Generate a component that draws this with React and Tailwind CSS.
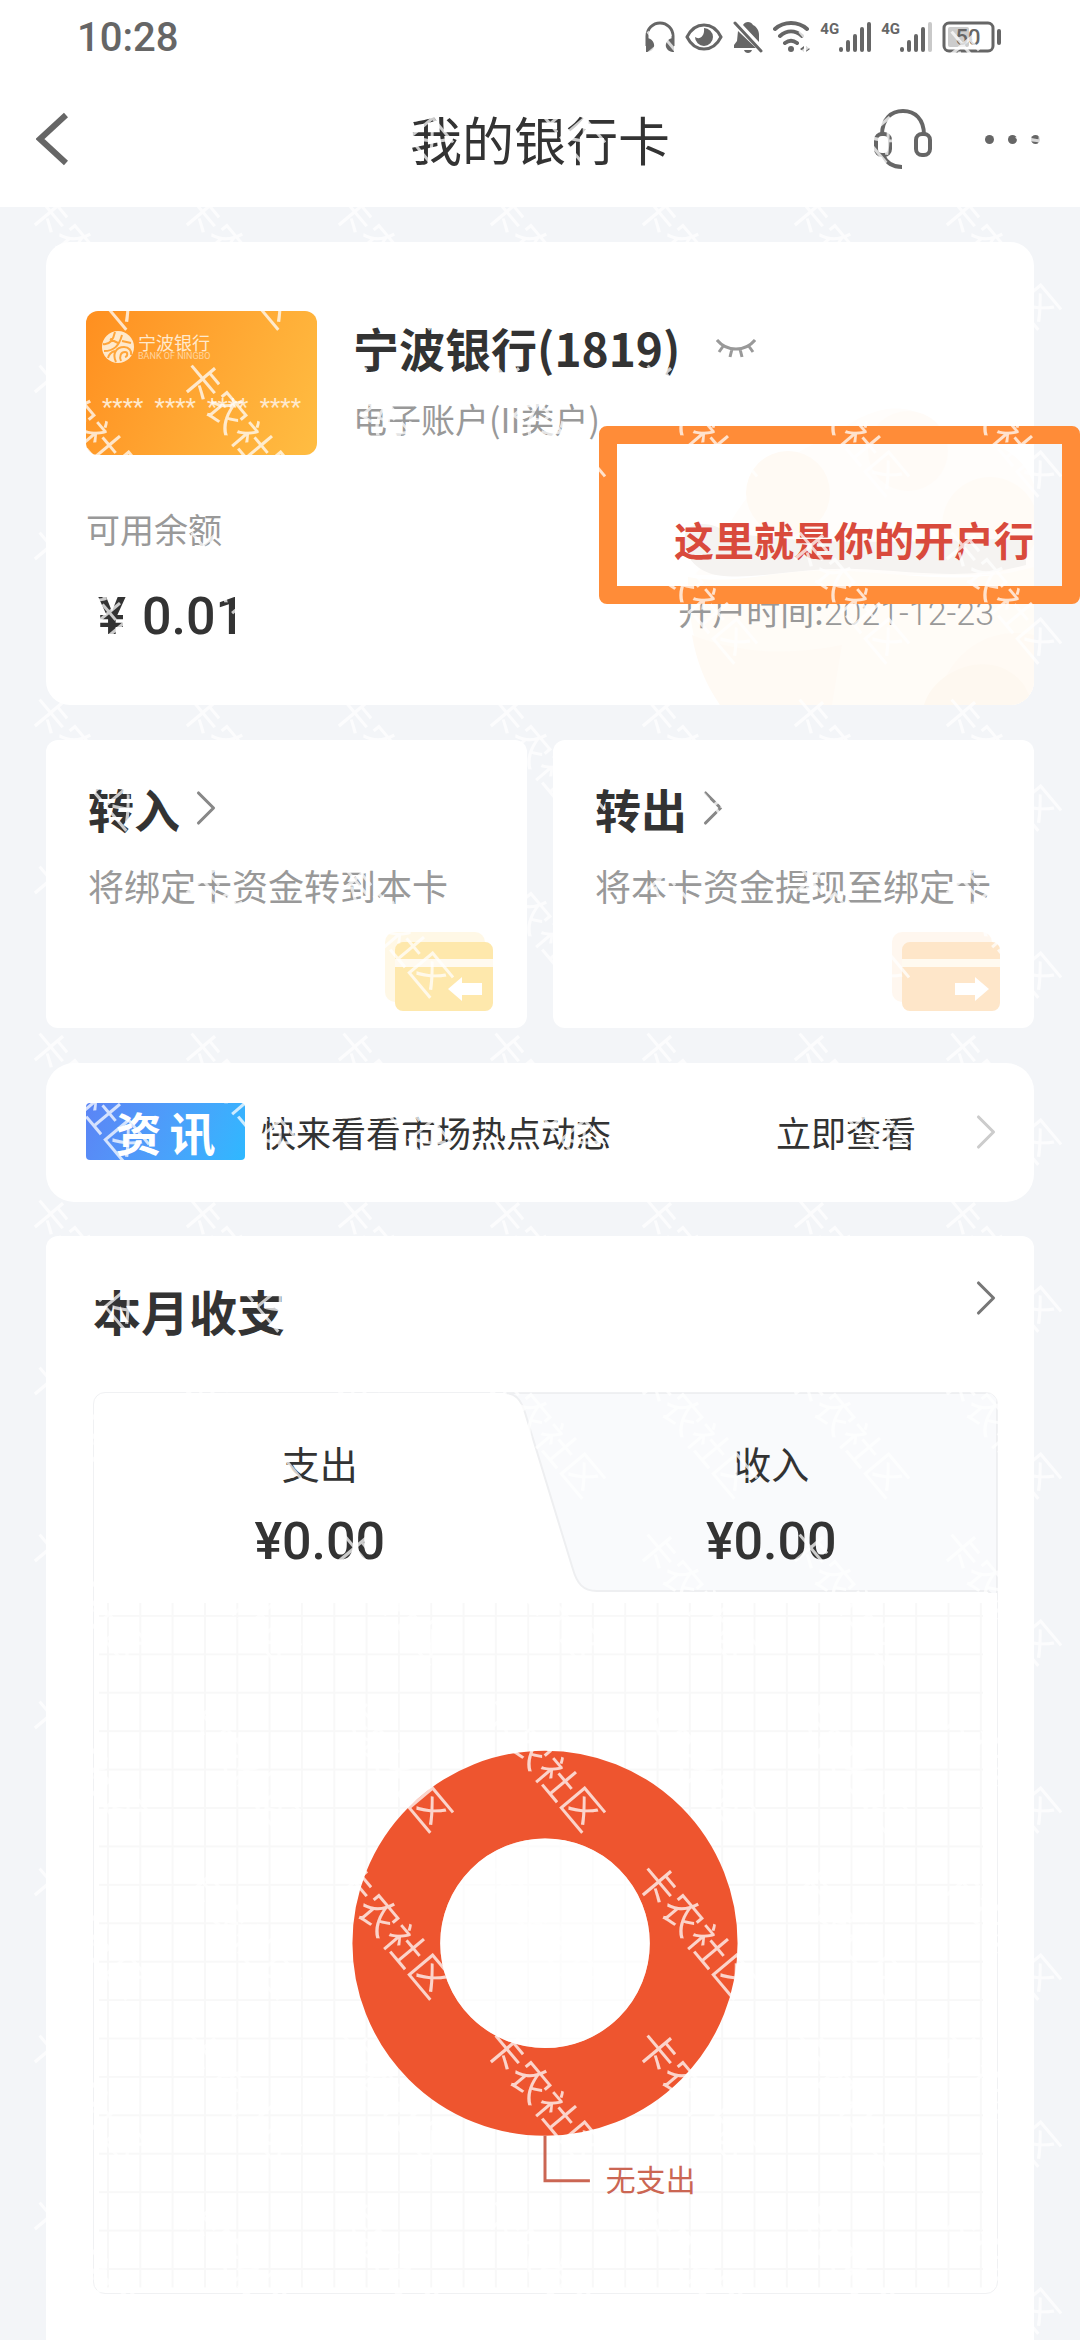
import { ChevronRight } from 'lucide-react';

const stars = ['****', '****', '****', '****'];

const transfers = [
  { title: '转入', desc: '将绑定卡资金转到本卡', direction: 'in' },
  { title: '转出', desc: '将本卡资金提现至绑定卡', direction: 'out' },
];

const tabs = [
  { label: '支出', amount: '¥0.00' },
  { label: '收入', amount: '¥0.00' },
];

function Signal({ weak }) {
  return (
    <div className="flex items-start">
      <span className="font-['Roboto',sans-serif] text-[15px] leading-4 font-bold">4G</span>
      <svg width="32" height="32" viewBox="0 0 32 32" stroke="currentColor" strokeWidth="4" strokeLinecap="round">
        <path d="M2 28v1M9 21v8M16 15v14M23 8v21" />
        <path d="M30 3v26" opacity={weak ? 0.35 : 1} />
      </svg>
    </div>
  );
}

function StatusBar() {
  return (
    <div className="h-[75px] pl-[77px] pr-[78px] flex items-center justify-between text-[#666]">
      <span className="font-['Roboto',sans-serif] text-[40px] leading-[48px] font-medium">10:28</span>
      <div className="pb-0.5 flex items-center gap-[10px]">
        <svg width="30" height="32" viewBox="0 0 30 32" fill="none" stroke="currentColor" strokeWidth="3">
          <path d="M2 25V15a13 13 0 0 1 26 0v10" />
          <path d="M1 17c6 0 9 5 8 9-1 3-4 5-8 5zM29 17c-6 0-9 5-8 9 1 3 4 5 8 5z" fill="currentColor" stroke="none" />
        </svg>
        <svg width="38" height="28" viewBox="0 0 38 28" fill="none" stroke="currentColor" strokeWidth="3">
          <path d="M2 14C10-2 28-2 36 14 28 30 10 30 2 14z" />
          <path d="M19 5a9 9 0 1 1-9 9c4 3 10 0 9-9z" fill="currentColor" stroke="none" />
        </svg>
        <svg width="30" height="32" viewBox="0 0 30 32" fill="currentColor">
          <path d="M10 4c1-2 3-3 5-3s4 1 5 3c4 2 6 6 6 10v7zM5 10l18 17H1v-3l3-4zM11 29h8c-1 4-7 4-8 0z" />
          <path d="M2 2l26 28" stroke="currentColor" strokeWidth="3" strokeLinecap="round" />
        </svg>
        <svg width="37" height="32" viewBox="0 0 37 32" fill="none" stroke="currentColor" strokeWidth="4" strokeLinecap="round">
          <path d="M2 8c9-8 23-8 32 0M7 15c7-6 15-6 22 0M12 22c4-3 8-3 12 0" />
          <circle cx="18" cy="28" r="3" fill="currentColor" stroke="none" />
          <path d="M27 28l4-3v6zM37 28l-4-3v6z" fill="currentColor" stroke="none" />
        </svg>
        <Signal />
        <Signal weak />
        <svg width="60" height="32" viewBox="0 0 60 32" fill="none" stroke="currentColor">
          <rect x="2" y="2" width="49" height="28" rx="5" strokeWidth="3" />
          <rect x="6" y="6" width="21" height="20" rx="2" fill="#ccc" stroke="none" />
          <path d="M57 10v12" strokeWidth="4" strokeLinecap="round" />
          <text x="26" y="24" textAnchor="middle" fill="currentColor" stroke="none" className="font-['Roboto',sans-serif] text-[22px] font-medium">50</text>
        </svg>
      </div>
    </div>
  );
}

function TitleBar() {
  return (
    <div className="h-[132px] px-9 pb-1 grid grid-cols-[1fr_auto_1fr] items-center">
      <button aria-label="返回" className="w-8 text-[#666]">
        <svg width="32" height="54" viewBox="0 0 32 54" fill="none" stroke="currentColor" strokeWidth="6">
          <path d="M30 3L4 27l26 24" />
        </svg>
      </button>
      <h1 className="text-[52px] leading-[60px] text-[#333]">我的银行卡</h1>
      <div className="flex items-center justify-end gap-[53px] text-[#666]">
        <button aria-label="客服">
          <svg width="58" height="60" viewBox="0 0 58 60" fill="none" stroke="currentColor" strokeWidth="4">
            <path d="M8 26C8 10 17 2 29 2s21 8 21 24M9 46c3 7 9 12 19 12" />
            <rect x="2" y="25" width="14" height="21" rx="6" />
            <rect x="42" y="25" width="14" height="21" rx="6" />
          </svg>
        </button>
        <button aria-label="更多" className="flex gap-[14px] pr-1">
          <i className="w-[9px] h-[9px] rounded-full bg-[#666]" />
          <i className="w-[9px] h-[9px] rounded-full bg-[#666]" />
          <i className="w-[9px] h-[9px] rounded-full bg-[#666]" />
        </button>
      </div>
    </div>
  );
}

function BankCard() {
  return (
    <div className="w-[231px] h-36 px-4 pt-5 rounded-xl bg-linear-115 from-[#ff8f1f] to-[#ffbd42] text-[#ffe9cc]">
      <div className="flex items-center gap-1">
        <svg width="32" height="32" viewBox="0 0 32 32" fill="none" stroke="#ffa53a" strokeWidth="2">
          <circle cx="16" cy="16" r="16" fill="#ffe9cc" stroke="none" />
          <path d="M1 13c6 1 10-3 12-12M2 20c10 0 15-5 18-16M14 31c-4-8 0-15 8-15 5 0 8 4 7 8M19 30c-2-5 0-9 4-9 3 0 3 4 0 5M6 27c1-4 3-6 7-7M20 10l9 2M8 8l8 4" />
        </svg>
        <div>
          <p className="text-[18px] leading-[18px]">宁波银行</p>
          <p className="font-['Roboto',sans-serif] text-[9px] leading-[10px] opacity-70">BANK OF NINGBO</p>
        </div>
      </div>
      <div className="mt-7 flex justify-between font-['Roboto',sans-serif] text-[24px] leading-8">
        {stars.map((s, i) => <span key={i}>{s}</span>)}
      </div>
    </div>
  );
}

// faint bowl of coins behind the opening date
function CardArt() {
  return (
    <svg width="360" height="300" viewBox="0 0 360 300" className="absolute right-0 bottom-0" aria-hidden="true">
      <path d="M40 150C70 80 110 50 160 30c50-40 90-30 110 0 50 0 80 20 90 50v90H20z" fill="#fffdfb" />
      <circle cx="234" cy="46" r="40" fill="#fffbf7" />
      <circle cx="114" cy="88" r="42" fill="#fffaf4" />
      <circle cx="316" cy="120" r="48" fill="#fffbf6" />
      <path d="M12 125c10-10 30-6 40 2 90 14 190 10 300 6v27c-60 16-110 6-170 4-60-2-100 12-140 6-20-4-36-20-30-45z" fill="#f5f3f1" />
      <path d="M14 172c50 10 90-10 160-6 70 4 120 14 186-4v138H46C24 260 14 220 14 172z" fill="#fffcf7" />
      <path d="M18 230c50 20 100 20 150 10l-10 60H46c-14-20-24-44-28-70zM262 300c10-50 50-80 98-70v70z" fill="#fffaf4" />
      <path d="M250 300c10-36 70-60 100-20l10 20z" fill="#fef8f0" />
    </svg>
  );
}

function AccountCard() {
  return (
    <section className="relative h-[463px] px-10 pt-[69px] bg-white rounded-3xl overflow-hidden">
      <CardArt />
      <div className="relative flex gap-9">
        <BankCard />
        <div className="pt-1.5">
          <div className="flex items-center gap-9">
            <h2 className="text-[46px] leading-[60px] font-bold text-[#333]">宁波银行(1819)</h2>
            <button aria-label="隐藏余额">
              <svg width="40" height="22" viewBox="0 0 40 22" fill="none" stroke="#999" strokeWidth="3">
                <path d="M1 4c10 12 28 12 38 0M8 9l-5 7M16 13l-2 8M24 13l2 8M32 9l5 7" />
              </svg>
            </button>
          </div>
          <p className="mt-4 text-[34px] leading-[52px] text-[#999]">电子账户(II类户)</p>
        </div>
      </div>
      <div className="relative mt-12 flex items-end justify-between">
        <div>
          <p className="text-[34px] leading-[52px] text-[#999]">可用余额</p>
          <p className="mt-6 pl-3 flex items-baseline gap-4 font-['Roboto',sans-serif] text-[52px] leading-[76px] font-bold text-[#333]">
            <span>¥</span>
            <span className="font-medium">0.01</span>
          </p>
        </div>
        <p className="pb-4 text-[34px] leading-[52px] text-[#999]">
          开户时间:<span className="font-['Roboto',sans-serif] font-light">2021-12-23</span>
        </p>
      </div>
    </section>
  );
}

function TransferIcon({ direction }) {
  const isIn = direction === 'in';
  const color = isIn ? '#fee8ac' : '#fee6c9';
  return (
    <svg width="108" height="79" viewBox="0 0 108 79">
      <rect width="100" height="70" rx="10" fill={color} opacity="0.3" />
      <path d="M10 27V18a8 8 0 0 1 8-8h82a8 8 0 0 1 8 8v9zM10 35h98v36a8 8 0 0 1-8 8H18a8 8 0 0 1-8-8z" fill={color} />
      <path d="M10 27h98v8H10z" fill="#fffaf0" />
      {isIn
        ? <path d="M63 57l14-12v6h20v12H77v6z" fill="#fff" />
        : <path d="M97 57L83 45v6H63v12h20v6z" fill="#fff" />}
    </svg>
  );
}

function TransferCard({ title, desc, direction }) {
  return (
    <a href="#" className="h-72 pt-[38px] px-[42px] flex flex-col bg-white rounded-xl">
      <span className="flex items-center text-[46px] leading-[60px] font-bold text-[#333]">
        {title}
        <ChevronRight size={60} strokeWidth={1.25} color="#888" className="-ml-1" />
      </span>
      <span className="mt-5 text-[36px] leading-[54px] text-[#999] whitespace-nowrap">{desc}</span>
      <span className="mt-5 -mr-2 self-end">
        <TransferIcon direction={direction} />
      </span>
    </a>
  );
}

function NewsBar() {
  return (
    <a href="#" className="h-[139px] pl-10 pr-[18px] pb-0.5 flex items-center bg-white rounded-[28px] text-[35px] leading-[52px] text-[#333]">
      <span className="w-[159px] h-[57px] flex items-center justify-center gap-2 rounded-sm bg-linear-115 from-[#5b84f5] to-[#2eb8ff] text-[46px] leading-[57px] font-bold text-white">
        <span>资</span>
        <span>讯</span>
      </span>
      <span className="ml-4 flex-1">快来看看市场热点动态</span>
      <span>立即查看</span>
      <ChevronRight size={60} strokeWidth={1.25} color="#ccc" className="ml-10" />
    </a>
  );
}

function ExpenseChart() {
  return (
    <svg viewBox="0 0 905 702" className="block w-full">
      <defs>
        <pattern id="grid" x="13" y="22" width="32.4" height="38.5" patternUnits="userSpaceOnUse">
          <path d="M0 1H33M1 0V39" fill="none" stroke="#f8f8f8" strokeWidth="2" />
        </pattern>
      </defs>
      <rect x="5" y="10" width="886" height="686" fill="url(#grid)" />
      <circle cx="452" cy="351" r="149" fill="none" stroke="#ee552f" strokeWidth="88" />
      <circle cx="452" cy="351" r="105" fill="#fff" opacity="0.6" />
      <path d="M452 544v45h45" fill="none" stroke="#cb6653" strokeWidth="3" />
      <text x="513" y="599" fill="#cb6653" className="text-[30px]">无支出</text>
    </svg>
  );
}

function MonthlySummary() {
  return (
    <section className="flex-1 px-9 pt-8 pb-10 pl-[47px] bg-white rounded-t-xl">
      <div className="pb-10 flex items-start justify-between">
        <h2 className="text-[48px] leading-[84px] font-bold text-[#333]">本月收支</h2>
        <a href="#" aria-label="查看本月收支" className="-mr-[18px]">
          <ChevronRight size={60} strokeWidth={1.25} color="#777" />
        </a>
      </div>
      <div className="rounded-xl border border-[#f0f1f3] overflow-hidden">
        <div className="relative h-[200px]">
          <svg viewBox="0 0 905 202" preserveAspectRatio="none" className="absolute inset-0 w-full h-full" aria-hidden="true">
            <path d="M412 0c10 0 16 6 20 20l48 158c4 14 10 22 24 22h392l9 8V0z" fill="#f9fafc" stroke="#eeeff1" strokeWidth="2" />
          </svg>
          <div className="relative h-full grid grid-cols-2">
            {tabs.map((tab) => (
              <button key={tab.label} className="pt-6 flex flex-col items-center justify-center gap-5 text-[#333]">
                <span className="text-[38px] leading-[54px]">{tab.label}</span>
                <span className="font-['Roboto',sans-serif] text-[52px] leading-[64px] font-medium">{tab.amount}</span>
              </button>
            ))}
          </div>
        </div>
        <ExpenseChart />
      </div>
    </section>
  );
}

function Callout() {
  return (
    <div className="absolute right-0 top-[426px] w-[481px] h-[178px] pr-7 pt-12 flex items-center justify-end border-[18px] border-[#ff8c38] rounded-lg">
      <strong className="text-[40px] leading-[60px] font-bold text-[#d94a3c] whitespace-nowrap">这里就是你的开户行</strong>
    </div>
  );
}

function Watermark() {
  return (
    <svg className="absolute inset-0 w-full h-full pointer-events-none" aria-hidden="true">
      <defs>
        <pattern id="mark" x="12" y="10" width="152" height="167" patternUnits="userSpaceOnUse">
          <text x="76" y="98" transform="rotate(50 76 83)" textAnchor="middle" fill="#fff" fillOpacity="0.75" className="text-[40px]">卡农社区</text>
        </pattern>
      </defs>
      <rect width="100%" height="100%" fill="url(#mark)" />
    </svg>
  );
}

export default function App() {
  return (
    <div className="relative min-h-screen flex flex-col overflow-hidden bg-[#f3f5f8] font-['Noto_Sans_CJK_SC',sans-serif]">
      <header className="bg-white">
        <StatusBar />
        <TitleBar />
      </header>
      <main className="flex-1 px-[46px] pt-[35px] flex flex-col">
        <AccountCard />
        <div className="my-[35px] grid grid-cols-2 gap-[26px]">
          {transfers.map((item) => <TransferCard key={item.title} {...item} />)}
        </div>
        <NewsBar />
        <div className="h-[34px]" />
        <MonthlySummary />
      </main>
      <Callout />
      <Watermark />
    </div>
  );
}
